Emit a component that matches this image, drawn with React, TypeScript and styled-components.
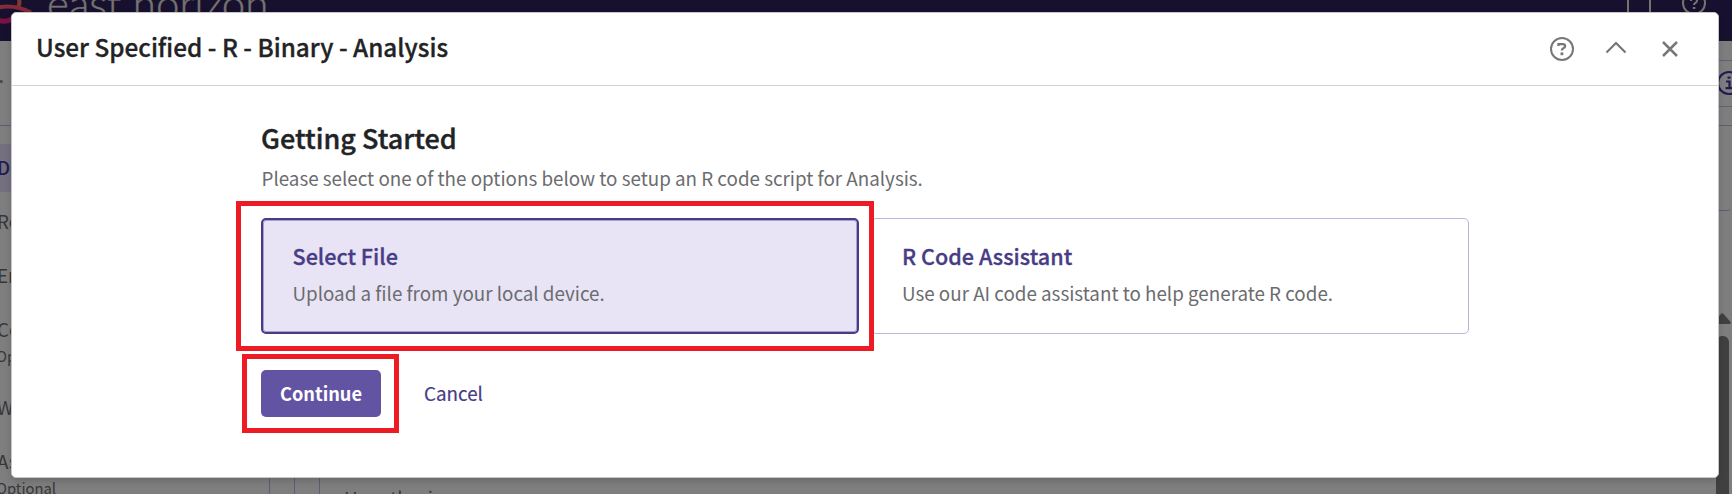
import React from 'react';
import styled, { createGlobalStyle } from 'styled-components';

const Global = createGlobalStyle`
  * { box-sizing: border-box; }
  body { margin: 0; overflow: hidden; }
  button { font: inherit; border: 0; background: none; padding: 0; cursor: pointer; }
  h1, h2, h3, p { margin: 0; }
`;

const Page = styled.div`
  position: relative;
  width: 1732px;
  height: 494px;
  overflow: hidden;
  background: #7e7e7e;
  font-family: 'Noto Sans CJK SC', 'Noto Sans', sans-serif;
  font-size: 18.8px;
  color: #6b6c6f;
`;

/* Dimmed application behind the dialog */
const TopBar = styled.header`
  display: flex;
  justify-content: space-between;
  height: 41px;
  background: #17112f;
  overflow: hidden;
`;

const Brand = styled.div`
  display: flex;
  align-items: flex-start;
`;

const BrandName = styled.span`
  margin: -22px 0 0 15px;
  font: 300 42px/50px Lato, sans-serif;
  -webkit-text-stroke: 0.4px #77746f;
  color: #77746f;
  white-space: nowrap;
`;

const TopIcons = styled.div`
  display: flex;
  gap: 30px;
  padding-right: 25px;
`;

const SubBar = styled.div`
  display: flex;
  align-items: center;
  justify-content: space-between;
  height: 85px;
  border-bottom: 1px solid #5f5d72;
`;

const BackDash = styled.span`
  width: 3px;
  height: 3px;
  margin-top: -3px;
  border-radius: 0 2px 2px 0;
  background: #4c4c50;
`;

const Tools = styled.div`
  display: flex;
  align-items: center;
  justify-content: flex-end;
  width: 300px;
  height: 47px;
  border: solid #625f7c;
  border-width: 1px 0;
`;

const Workspace = styled.div`
  display: flex;
  height: 368px;
`;

const Sidebar = styled.nav`
  width: 270px;
  height: 100%;
  padding-top: 18px;
  border-right: 1px solid #5f5d72;
`;

const NavItem = styled.div<{ $active?: boolean; $tall?: boolean }>`
  height: ${p => (p.$active ? 48 : p.$tall ? 78 : 54)}px;
  padding-top: ${p => (p.$active ? 9 : 15)}px;
  text-indent: -3px;
  line-height: 28px;
  white-space: nowrap;
  color: ${p => (p.$active ? '#231a52' : '#37373a')};
  background: ${p => (p.$active ? '#747080' : 'transparent')};
  font-weight: ${p => (p.$active ? 500 : 400)};
`;

const NavNote = styled.div`
  margin-top: 2px;
  text-indent: -4px;
  font-size: 14.8px;
  line-height: 22px;
`;

const Gutter = styled.div`
  width: 25px;
  border-right: 1px solid #5f5d72;
`;

const Panel = styled.div`
  width: 25px;
  border-right: 1px solid #5f5d72;
`;

const PanelLabel = styled.div`
  align-self: flex-end;
  height: 6px;
  padding-left: 24px;
  line-height: 20px;
  color: #37373a;
`;

const RightRail = styled.div`
  width: 60px;
  margin-left: auto;
`;

const CardEdge = styled.div`
  height: 85px;
  margin-right: 1px;
  border-bottom: 1px solid #5f5d7e;
  border-radius: 0 0 4px 0;
`;

const Scroller = styled.div`
  display: flex;
  flex-direction: column;
  align-items: center;
  gap: 12px;
  width: 19px;
  margin: 102px 0 0 41px;
`;

const Thumb = styled.div`
  width: 13px;
  height: 180px;
  margin-right: 1px;
  border-radius: 6px;
  background: #404040;
`;

/* Dialog */
const Dialog = styled.section`
  position: absolute;
  left: 11px;
  top: 12px;
  width: 1708px;
  height: 466px;
  border: 1px solid #c6c6ca;
  border-radius: 5px;
  background: #fff;
  box-shadow: 0 3px 7px rgba(0, 0, 0, 0.16);
`;

const DialogHeader = styled.header`
  display: flex;
  align-items: center;
  justify-content: space-between;
  height: 73px;
  padding: 0 34px 0 24px;
  border-bottom: 1px solid #d3d3d5;
`;

const DialogTitle = styled.h1`
  margin-top: -4px;
  font-size: 24.3px;
  line-height: 32px;
  font-weight: 500;
  -webkit-text-stroke: 0.3px #222325;
  color: #222325;
`;

const DialogActions = styled.div`
  display: flex;
  align-items: center;
  gap: 26px;
`;

const IconButton = styled.button`
  display: flex;
  width: 28px;
  height: 28px;
`;

const Content = styled.div`
  width: 1208px;
  margin: 35px 0 0 249px;
`;

const Heading = styled.h2`
  font-size: 27px;
  line-height: 34px;
  font-weight: 500;
  -webkit-text-stroke: 0.4px #222325;
  color: #222325;
`;

const Intro = styled.p`
  margin: 9px 0 0 0.5px;
  line-height: 28px;
`;

const Options = styled.div`
  position: relative;
  display: grid;
  grid-template-columns: 1fr 1fr;
  gap: 12px;
  margin-top: 26px;
`;

const Option = styled.div<{ $selected?: boolean }>`
  height: 116px;
  padding: ${p => (p.$selected ? '22px 29.5px' : '23px 30px')};
  border: ${p => (p.$selected ? '2px solid #483c86' : '1px solid #bdb4e0')};
  border-radius: 5px;
  background: ${p => (p.$selected ? '#e8e4f5' : '#fff')};
  box-shadow: ${p => (p.$selected ? 'inset 0 0 0 1px #a79fd0' : 'none')};
`;

const OptionTitle = styled.h3`
  font-size: 21.6px;
  line-height: 28px;
  font-weight: 500;
  -webkit-text-stroke: 0.3px #483c86;
  color: #483c86;
`;

const OptionText = styled.p`
  margin-top: 9px;
  line-height: 28px;
`;

const Footer = styled.div`
  position: relative;
  display: flex;
  align-items: center;
  gap: 43px;
  margin-top: 36px;
`;

const Primary = styled.button`
  width: 120px;
  height: 47px;
  padding-bottom: 2px;
  border-radius: 5px;
  background: #6354a3;
  color: #fff;
  font-size: 18.2px;
  font-weight: 700;
`;

const Cancel = styled.button`
  padding-bottom: 2px;
  color: #483c86;
  font-weight: 400;
  -webkit-text-stroke: 0.2px #483c86;
`;

const Callout = styled.div<{ $x: number; $y: number; $w: number; $h: number }>`
  position: absolute;
  left: ${p => p.$x}px;
  top: ${p => p.$y}px;
  width: ${p => p.$w}px;
  height: ${p => p.$h}px;
  border: 5px solid #ed1c24;
`;

const HelpIcon = ({ size, color, width }: { size: number; color: string; width: number }) => (
  <svg width={size} height={size} viewBox="0 0 28 28" fill="none" stroke={color} strokeWidth={width}>
    <circle cx="14" cy="14" r="11" />
    <path d="M10.500 11V9.200h4.200q2.400 0 2.400 1.900 0 1.500-1.700 2.200-1.500.7-1.500 2.300" strokeWidth={width + 0.3} />
    <path d="M12.500 18.800h2.800" strokeWidth="2.800" />
  </svg>
);

export default function App() {
  return (
    <Page>
      <Global />
      <TopBar>
        <Brand>
          <svg width="32" height="26" viewBox="0 0 32 26" fill="none" strokeWidth="4">
            <path d="M18.500 -2Q21 4 17 9" stroke="#81382f" />
            <path d="M-2 7.5Q14 4 31 12.5" stroke="#832b38" />
            <path d="M-2 20Q5 23 12 19" stroke="#7c1244" strokeWidth="5" />
          </svg>
          <BrandName>east horizon</BrandName>
        </Brand>
        <TopIcons>
          <svg width="24" height="16" viewBox="0 0 24 16" fill="none" stroke="#77746f" strokeWidth="2">
            <path d="M1 -2V14H23V-2" />
          </svg>
          <svg width="26" height="16" viewBox="0 0 26 16" fill="none" stroke="#77746f" strokeWidth="2">
            <circle cx="13" cy="3" r="11" />
            <path d="M10 1q0-2.500 3-2.500 3 0 3 2.300 0 1.500-1.700 2.200-1.300.6-1.300 2M11.800 8h2.600" />
          </svg>
        </TopIcons>
      </TopBar>
      <SubBar>
        <BackDash />
        <Tools>
          <svg width="14" height="26" viewBox="0 0 14 26" fill="none" stroke="#231a52" strokeWidth="2.200">
            <circle cx="11" cy="13" r="11" />
            <path d="M8 11.500H11.500V18M7.500 18.200H14M9.500 7.700H12.500" />
          </svg>
        </Tools>
      </SubBar>
      <Workspace>
        <Sidebar>
          <NavItem $active>Design</NavItem>
          <NavItem>Response</NavItem>
          <NavItem>Enrollment</NavItem>
          <NavItem $tall>
            Control
            <NavNote>Optional</NavNote>
          </NavItem>
          <NavItem>Weights</NavItem>
          <NavItem $tall>
            Assurance
            <NavNote>Optional</NavNote>
          </NavItem>
        </Sidebar>
        <Gutter />
        <Panel />
        <PanelLabel>Hypothesis</PanelLabel>
        <RightRail>
          <CardEdge />
          <Scroller>
            <svg width="19" height="11" viewBox="0 0 19 11">
              <path d="M9 0L11 1.500 18 9.500 17 11H1L0 9.500 7.500 1.500Z" fill="#404040" />
            </svg>
            <Thumb />
          </Scroller>
        </RightRail>
      </Workspace>

      <Dialog>
        <DialogHeader>
          <DialogTitle>User Specified - R - Binary - Analysis</DialogTitle>
          <DialogActions>
            <IconButton aria-label="Help">
              <HelpIcon size={28} color="#77777a" width={2} />
            </IconButton>
            <IconButton aria-label="Collapse">
              <svg width="28" height="28" viewBox="0 0 28 28" fill="none" stroke="#77777a" strokeWidth="2.200">
                <path d="M4.500 17.500L14 8 23.500 17.500" />
              </svg>
            </IconButton>
            <IconButton aria-label="Close">
              <svg width="28" height="28" viewBox="0 0 28 28" fill="none" stroke="#77777a" strokeWidth="2.500">
                <path d="M7 7L21 21M21 7L7 21" />
              </svg>
            </IconButton>
          </DialogActions>
        </DialogHeader>
        <Content>
          <Heading>Getting Started</Heading>
          <Intro>Please select one of the options below to setup an R code script for Analysis.</Intro>
          <Options>
            <Option $selected>
              <OptionTitle>Select File</OptionTitle>
              <OptionText>Upload a file from your local device.</OptionText>
            </Option>
            <Option>
              <OptionTitle>R Code Assistant</OptionTitle>
              <OptionText>Use our AI code assistant to help generate R code.</OptionText>
            </Option>
            <Callout $x={-25} $y={-17} $w={638} $h={150} />
          </Options>
          <Footer>
            <Primary>Continue</Primary>
            <Cancel>Cancel</Cancel>
            <Callout $x={-19} $y={-16} $w={157} $h={79} />
          </Footer>
        </Content>
      </Dialog>
    </Page>
  );
}
